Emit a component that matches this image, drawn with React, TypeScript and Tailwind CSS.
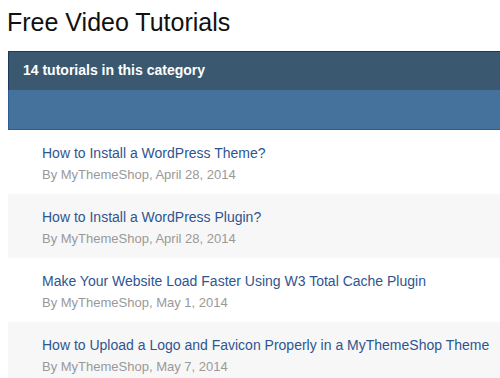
const tutorials = [
  { title: "How to Install a WordPress Theme?", date: "April 28, 2014" },
  { title: "How to Install a WordPress Plugin?", date: "April 28, 2014" },
  { title: "Make Your Website Load Faster Using W3 Total Cache Plugin", date: "May 1, 2014" },
  { title: "How to Upload a Logo and Favicon Properly in a MyThemeShop Theme", date: "May 7, 2014" },
];

export default function App() {
  return (
    <div className="w-[500px] h-[378px] overflow-hidden bg-white font-['Liberation_Sans',Arial,sans-serif]">
      <h1 className="pl-[7px] pt-[8px] h-[51px] text-[25px] leading-[29px] text-[#111]">Free Video Tutorials</h1>

      <div className="ml-[8px]">
        <div className="border-t border-l border-[#1e3a5a] bg-[#3a5870] h-[39px] flex items-center pl-[14px] pb-[1px]">
          <span className="text-white font-bold text-[14px]">14 tutorials in this category</span>
        </div>
        <div className="border-l border-b border-[#2c5f90] bg-[#44729c] h-[40px]"></div>

        <ul>
          {tutorials.map((t, i) => (
            <li
              key={t.title}
              className={`h-[64px] pl-[34px] pt-[14px] ${i % 2 === 1 ? "bg-[#f7f7f7]" : "bg-white"}`}
            >
              <a className="block text-[14px] leading-[18px] text-[#2f5590] whitespace-nowrap">{t.title}</a>
              <p className="mt-[5px] text-[13px] leading-[16px] text-[#999]">By MyThemeShop, {t.date}</p>
            </li>
          ))}
        </ul>
      </div>
    </div>
  );
}
